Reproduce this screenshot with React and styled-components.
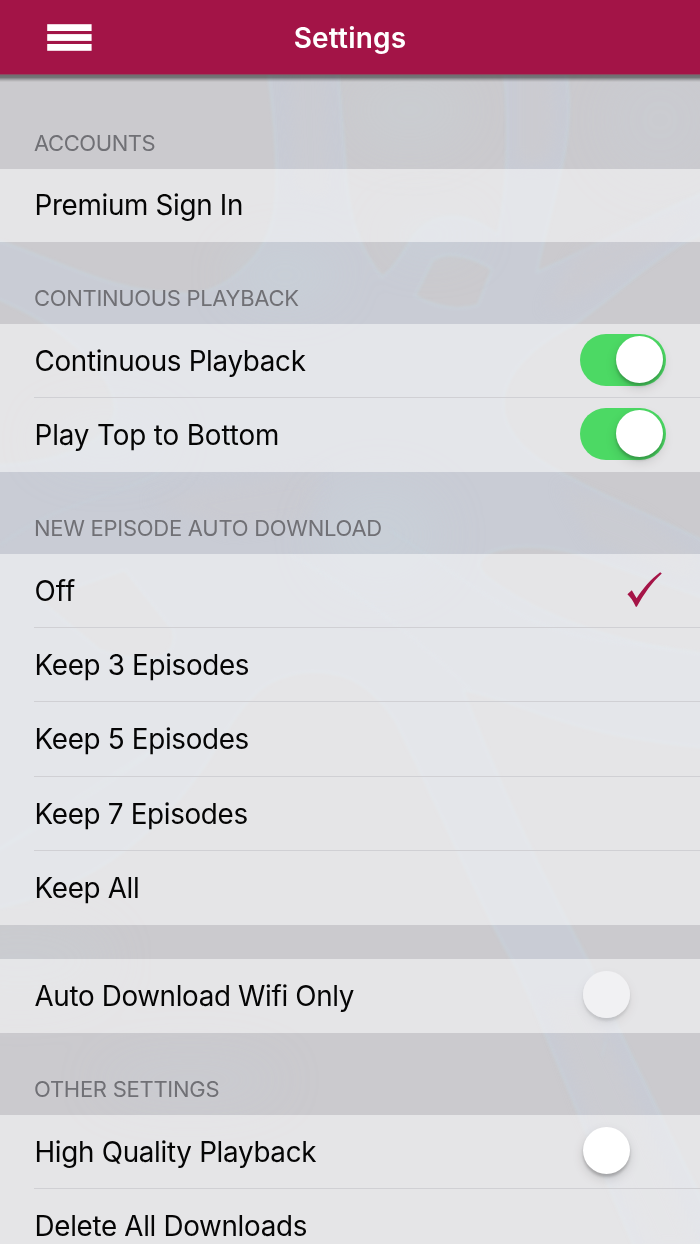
import React from 'react';
import styled, { createGlobalStyle } from 'styled-components';

const groups = [
  {
    title: 'ACCOUNTS',
    top: 87,
    spacing: -0.42,
    rows: [{ label: 'Premium Sign In', height: 73 }],
  },
  {
    title: 'CONTINUOUS PLAYBACK',
    top: 82,
    spacing: -0.32,
    rows: [
      { label: 'Continuous Playback', height: 74, toggle: 'on' },
      { label: 'Play Top to Bottom', height: 74, toggle: 'on', spacing: -0.12 },
    ],
  },
  {
    title: 'NEW EPISODE AUTO DOWNLOAD',
    top: 82,
    rows: [
      { label: 'Off', height: 74, checked: true, spacing: 0 },
      { label: 'Keep 3 Episodes', height: 74 },
      { label: 'Keep 5 Episodes', height: 75 },
      { label: 'Keep 7 Episodes', height: 74 },
      { label: 'Keep All', height: 74 },
    ],
  },
  {
    top: 34,
    rows: [{ label: 'Auto Download Wifi Only', height: 74, toggle: 'disabled', spacing: -0.35 }],
  },
  {
    title: 'OTHER SETTINGS',
    top: 82,
    rows: [
      { label: 'High Quality Playback', height: 74, toggle: 'off', spacing: -0.3 },
      { label: 'Delete All Downloads', height: 74 },
    ],
  },
];

const Backdrop = () => (
  <BackdropSvg viewBox="0 0 700 1244" aria-hidden="true">
    <defs>
      <filter id="soft" x="-5%" y="-5%" width="110%" height="110%">
        <feGaussianBlur stdDeviation="1.5" />
      </filter>
      <filter id="inner" x="-20%" y="-20%" width="140%" height="140%">
        <feGaussianBlur stdDeviation="7" />
      </filter>
      <filter id="haze" x="-50%" y="-50%" width="200%" height="200%">
        <feGaussianBlur stdDeviation="22" />
      </filter>
    </defs>
    <rect width="700" height="1244" fill="#cbcace" />
    <g filter="url(#haze)" fill="#c9d0d8">
      <ellipse cx="410" cy="110" rx="60" ry="40" opacity="0.35" />
      <ellipse cx="660" cy="120" rx="60" ry="60" opacity="0.25" />
      <ellipse cx="190" cy="1080" rx="90" ry="25" opacity="0.25" />
      <ellipse cx="20" cy="960" rx="90" ry="40" opacity="0.3" />
    </g>
    <g filter="url(#soft)" fill="#c9ccd5" stroke="#c8d3db" strokeWidth="1.6">
      <path
        fillRule="evenodd"
        d="M268 70 C276 130 280 190 272 222 C262 262 222 292 190 294 C110 294 60 260 -10 238
          L-10 296 C50 318 115 368 115 410 C110 450 40 465 -10 465
          L-10 855 C70 810 135 765 175 735 L-10 855 L-10 910 C100 885 160 830 205 765 C240 710 255 675 310 672 C350 670 375 690 395 720
          C445 820 480 905 515 965 C550 1040 580 1120 640 1260 L730 1260
          C680 1150 630 1060 590 965 C545 880 505 800 463 690
          C520 700 560 735 710 748 L710 655 C620 645 535 615 485 575
          C460 548 530 536 590 558 L710 600 L710 544 C650 515 610 500 560 472
          C480 430 485 370 575 324 C630 285 665 245 710 232 L710 190 C650 215 600 245 537 272
          C551 200 578 140 566 70 L504 70 C510 140 507 190 498 235
          C470 213 430 205 408 245 C400 258 390 272 382 277 C360 250 348 220 345 160 L338 70 Z
          M433 260 C450 248 478 260 492 269 L478 305 C455 312 434 306 415 296 Z
          M40 600 L125 570 L173 630 C180 670 130 660 100 650 Z"
      />
    </g>
    <g filter="url(#inner)" fill="#cbcbd0">
      <path d="M518 60 L518 160 C530 168 545 165 551 150 C556 120 553 95 550 60 Z" />
      <path d="M288 60 L295 190 L330 200 L325 60 Z" opacity="0.6" />
      <path d="M545 1000 L590 1000 L640 1110 L700 1250 L650 1250 L585 1110 Z" opacity="0.85" />
      <path d="M580 250 L700 205 L660 245 L590 290 L545 310 Z" opacity="0.9" />
      <path d="M560 485 L640 515 L700 560 L690 580 L590 540 Z" opacity="0.5" />
      <path d="M150 500 L320 470 L310 520 L230 530 Z" opacity="0.7" />
    </g>
    <g filter="url(#haze)" fill="#c8d4dc">
      <ellipse cx="285" cy="275" rx="50" ry="25" opacity="0.5" />
      <ellipse cx="380" cy="535" rx="60" ry="50" opacity="0.4" />
      <ellipse cx="105" cy="440" rx="60" ry="25" opacity="0.4" />
      <ellipse cx="430" cy="235" rx="40" ry="16" opacity="0.5" />
    </g>
    <g filter="url(#soft)" fill="none" stroke="#c6d6df" strokeWidth="1.5" opacity="0.5">
      <path d="M0 545 C60 500 110 500 160 472 M290 555 C360 590 430 650 470 690" />
      <path d="M390 530 C460 575 510 625 600 640 L700 652" />
      <path d="M606 1040 L602 1056" />
    </g>
  </BackdropSvg>
);

const MenuIcon = () => (
  <svg width="46" height="28" viewBox="0 0 46 28" fill="#fff">
    <rect x="0.2" y="0.2" width="44.4" height="6.8" />
    <rect x="0.2" y="10.1" width="44.4" height="6.8" />
    <rect x="0.2" y="20" width="44.4" height="6.8" />
  </svg>
);

const CheckIcon = () => (
  <svg width="36" height="36" viewBox="0 0 36 36" fill="#a51447">
    <path d="M0.4 22.2 L4.8 18.2 L9.6 26.2 C16 16.5 24 7 33.2 0.3 L34.8 1.6 C25 10.4 17 22 9.8 34.8 L8.8 34.8 C6.5 29.5 3.5 25 0.4 22.2Z" />
  </svg>
);

const App = () => {
  return (
    <>
      <GlobalStyle />
      <Screen>
        <Backdrop />
        <Header>
          <MenuButton aria-label="Menu">
            <MenuIcon />
          </MenuButton>
          <HeaderTitle>Settings</HeaderTitle>
          <HeaderSpacer />
        </Header>
        <HeaderShadow />

        <main>
          {groups.map((group, index) => (
            <section key={index}>
              <GroupTitle $height={group.top} $spacing={group.spacing}>
                {group.title}
              </GroupTitle>
              <GroupRows>
                {group.rows.map((row) => (
                  <Row key={row.label} $height={row.height}>
                    <RowLabel $spacing={row.spacing}>{row.label}</RowLabel>
                    {row.toggle && (
                      <Switch
                        role="switch"
                        aria-label={row.label}
                        aria-checked={row.toggle === 'on'}
                        $state={row.toggle}
                      >
                        <Knob $state={row.toggle} />
                      </Switch>
                    )}
                    {row.checked && (
                      <CheckMark>
                        <CheckIcon />
                      </CheckMark>
                    )}
                  </Row>
                ))}
              </GroupRows>
            </section>
          ))}
        </main>
      </Screen>
    </>
  );
};

export default App;

const GlobalStyle = createGlobalStyle`
  * {
    box-sizing: border-box;
  }
  body {
    margin: 0;
    overflow: hidden;
    font-family: Inter, 'Liberation Sans', sans-serif;
  }
`;

const Screen = styled.div`
  position: relative;
  isolation: isolate;
  width: 700px;
  height: 1244px;
  overflow: hidden;
  color: #050505;
`;
const BackdropSvg = styled.svg`
  position: absolute;
  inset: 0;
  z-index: -1;
  width: 100%;
  height: 100%;
`;
const Header = styled.header`
  display: flex;
  align-items: center;
  justify-content: space-between;
  height: 75px;
  padding: 1px 47px 0;
  background-color: #a31447;
  border-bottom: 1px solid #8b4a60;
`;
const HeaderShadow = styled.div`
  height: 7px;
  background: linear-gradient(
    rgba(0, 0, 0, 0.46),
    rgba(0, 0, 0, 0.42) 35%,
    rgba(0, 0, 0, 0.16) 70%,
    transparent
  );
`;
const MenuButton = styled.button`
  display: flex;
  width: 46px;
  padding: 0;
  border: 0;
  background: none;
`;
const HeaderTitle = styled.h1`
  margin: 0;
  color: #ffffff;
  font-size: 28px;
  font-weight: 600;
  letter-spacing: 0.2px;
`;
const HeaderSpacer = styled.div`
  width: 46px;
`;
const GroupTitle = styled.h2`
  display: flex;
  align-items: flex-end;
  height: ${({ $height }) => $height}px;
  margin: 0;
  padding: 0 34px 12px;
  color: #707075;
  font-size: 22px;
  font-weight: 400;
  line-height: 28px;
  letter-spacing: ${({ $spacing = -0.27 }) => $spacing}px;
`;
const GroupRows = styled.div`
  background-color: rgba(255, 255, 255, 0.51);
`;
const Row = styled.div`
  display: flex;
  align-items: center;
  justify-content: space-between;
  height: ${({ $height }) => $height}px;
  margin-left: 34px;
  padding-right: 34px;
  border-bottom: 1px solid #d0d0d4;

  &:last-child {
    border-bottom-color: transparent;
  }
`;
const RowLabel = styled.span`
  padding: 0 0 0 0.5px;
  font-size: 27.8px;
  line-height: 34px;
  letter-spacing: ${({ $spacing = -0.32 }) => $spacing}px;
  white-space: nowrap;
`;
const Switch = styled.div`
  width: 86px;
  height: 52px;
  margin-bottom: 2px;
  padding: 2.5px 2.5px;
  border-radius: 26px;
  background-color: ${({ $state }) => ($state === 'on' ? '#4cd964' : 'transparent')};
`;
const Knob = styled.div`
  width: 47px;
  height: 47px;
  margin-left: ${({ $state }) => ($state === 'on' ? '33.5px' : '0')};
  border-radius: 50%;
  background-color: ${({ $state }) =>
    $state === 'disabled' ? 'rgba(241, 241, 243, 0.95)' : '#ffffff'};
  box-shadow: ${({ $state }) =>
    $state === 'disabled'
      ? '0 5px 12px rgba(0, 0, 0, 0.08), 0 3px 3px rgba(0, 0, 0, 0.1)'
      : '0 5px 12px rgba(0, 0, 0, 0.14), 0 3px 3px rgba(0, 0, 0, 0.2)'};
`;
const CheckMark = styled.span`
  display: flex;
  margin: 0 3px 2px 0;
`;
